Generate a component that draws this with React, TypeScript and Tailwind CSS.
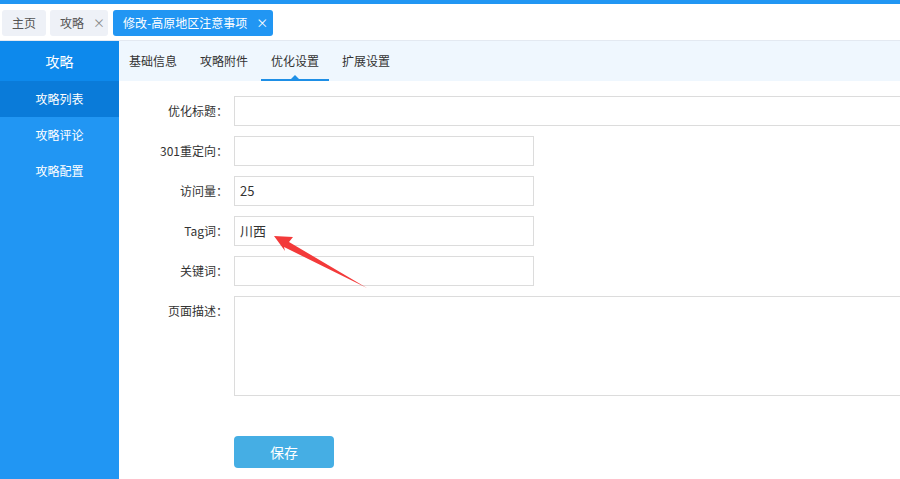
import React from "react";

const font = { fontFamily: '"Noto Sans CJK SC", "Noto Sans", sans-serif' };

function Field({ label, value, wide }: { label: string; value?: string; wide?: boolean }) {
  return (
    <div className="flex items-center h-[30px]">
      <div className="w-[115px] shrink-0 pr-[6px] text-right text-[12px] text-[#333] whitespace-nowrap">{label}</div>
      <div
        className={`h-[30px] shrink-0 border border-[#dcdcdc] bg-white flex items-center px-[5px] text-[13px] text-[#333] ${
          wide ? "w-[720px]" : "w-[300px]"
        }`}
      >
        {value}
      </div>
    </div>
  );
}

export default function App() {
  return (
    <div className="w-[900px] h-[479px] overflow-hidden bg-white flex flex-col" style={font}>
      <div className="h-[4px] bg-[#2196f3] shrink-0" />
      <div className="h-[37px] shrink-0 border-b border-[#e3e9f1] flex items-center gap-[4px] pl-[2px] pt-[1px]">
        <div className="h-[26px] w-[44px] rounded-[3px] bg-[#eef1f7] text-[#555] text-[12px] flex items-center justify-center">
          主页
        </div>
        <div className="h-[26px] w-[58px] rounded-[3px] bg-[#eef1f7] text-[#555] text-[12px] flex items-center pl-[10px] gap-[9px]">
          <span>攻略</span>
          <span className="text-[#888] text-[12px]">×</span>
        </div>
        <div className="ml-[1px] h-[26px] w-[160px] rounded-[3px] bg-[#2196f3] text-white text-[12px] flex items-center pl-[10px] gap-[9px]">
          <span>修改-高原地区注意事项</span>
          <span className="text-[12px]">×</span>
        </div>
      </div>
      <div className="flex flex-1 min-h-0">
        <div className="w-[119px] shrink-0 bg-[#2196f3] text-white text-[12px] flex flex-col">
          <div className="h-[40px] bg-[#0d89ec] flex items-center justify-center text-[14px]">攻略</div>
          <div className="h-[36px] bg-[#0a7bd9] flex items-center justify-center">攻略列表</div>
          <div className="h-[36px] flex items-center justify-center">攻略评论</div>
          <div className="h-[36px] flex items-center justify-center">攻略配置</div>
        </div>
        <div className="flex-1 min-w-0 flex flex-col overflow-hidden">
          <div className="h-[40px] shrink-0 bg-[#eff7fe] flex items-stretch gap-[3px] text-[12px] text-[#333]">
            {["基础信息", "攻略附件", "优化设置", "扩展设置"].map((t, i) => (
              <div key={t} className="relative px-[10px] flex items-center">
                {t}
                {i === 2 && (
                  <>
                    <div className="absolute left-0 right-0 bottom-0 h-[2px] bg-[#1e8fe6]" />
                    <div className="absolute left-1/2 -translate-x-1/2 bottom-[2px] w-0 h-0 border-l-[4px] border-r-[4px] border-b-[4px] border-l-transparent border-r-transparent border-b-[#1e8fe6]" />
                  </>
                )}
              </div>
            ))}
          </div>
          <div className="relative flex flex-col gap-[10px] pt-[15px]">
            <Field label="优化标题：" wide />
            <Field label="301重定向：" />
            <Field label="访问量：" value="25" />
            <Field label="Tag词：" value="川西" />
            <Field label="关键词：" />
            <div className="flex items-start">
              <div className="w-[115px] shrink-0 pr-[6px] pt-[6px] text-right text-[12px] text-[#333] whitespace-nowrap">页面描述：</div>
              <div className="h-[100px] w-[720px] shrink-0 border border-[#dcdcdc]" />
            </div>
            <div className="pl-[115px] pt-[30px]">
              <button className="w-[100px] h-[32px] rounded-[4px] bg-[#45aee4] text-white text-[14px]">保存</button>
            </div>
            <svg className="absolute pointer-events-none" width="781" height="400" style={{ left: 0, top: -81 }}>
              <polygon
                points="155,236 174,237 170,242 248,288 165,247 166,251"
                fill="#f33a3a"
              />
            </svg>
          </div>
        </div>
      </div>
    </div>
  );
}
